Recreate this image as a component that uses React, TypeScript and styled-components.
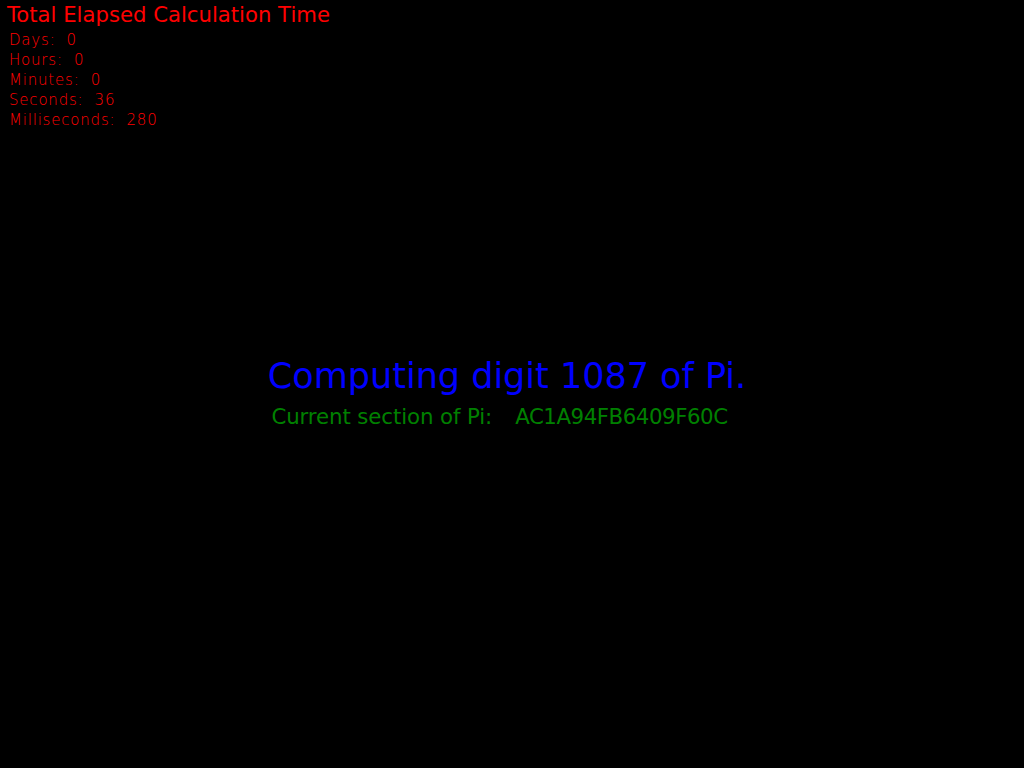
import React from "react";
import styled, { createGlobalStyle } from "styled-components";

const Global = createGlobalStyle`
  html, body { margin: 0; padding: 0; background: #000; }
  body { font-family: "DejaVu Sans", Verdana, sans-serif; }
`;

const Screen = styled.div`
  width: 1024px;
  height: 768px;
  background: #000;
  display: flex;
  flex-direction: column;
`;

const TimerPanel = styled.section`
  padding: 3px 0 0 7px;
  color: #ff0000;
`;

const Title = styled.h1`
  margin: 0;
  font-size: 21.2px;
  font-weight: normal;
  line-height: 24px;
  white-space: nowrap;
`;

const TimeList = styled.ul`
  list-style: none;
  margin: 3px 0 0 0;
  padding: 0 0 0 2px;
`;

const TimeRow = styled.li`
  font-size: 15px;
  line-height: 20px;
  font-weight: 200;
  letter-spacing: 0.8px;
  white-space: pre;
`;

const Center = styled.main`
  flex: 1;
  display: flex;
  flex-direction: column;
  align-items: center;
  padding-top: 226px;
`;

const Computing = styled.div<{ $shift: number }>`
  color: #0000ff;
  font-size: 35px;
  line-height: 40px;
  white-space: nowrap;
  margin-right: ${(p) => p.$shift}px;
`;

const Section = styled.div<{ $shift: number }>`
  color: #008000;
  font-size: 21.3px;
  line-height: 24px;
  margin-top: 9px;
  white-space: pre;
  display: flex;
  margin-right: ${(p) => p.$shift}px;
`;

const SectionLabel = styled.span`
  letter-spacing: -0.1px;
`;

const SectionValue = styled.span`
  margin-left: 23px;
  letter-spacing: -0.45px;
`;

const rows: [string, string][] = [
  ["Days", "0"],
  ["Hours", "0"],
  ["Minutes", "0"],
  ["Seconds", "36"],
  ["Milliseconds", "280"],
];

export default function App() {
  return (
    <Screen>
      <Global />
      <TimerPanel>
        <Title>Total Elapsed Calculation Time</Title>
        <TimeList>
          {rows.map(([k, v]) => (
            <TimeRow key={k}>{`${k}:  ${v}`}</TimeRow>
          ))}
        </TimeList>
      </TimerPanel>
      <Center>
        <Computing $shift={10}>Computing digit 1087 of Pi.</Computing>
        <Section $shift={25}>
          <SectionLabel>Current section of Pi:</SectionLabel>
          <SectionValue>AC1A94FB6409F60C</SectionValue>
        </Section>
      </Center>
    </Screen>
  );
}
